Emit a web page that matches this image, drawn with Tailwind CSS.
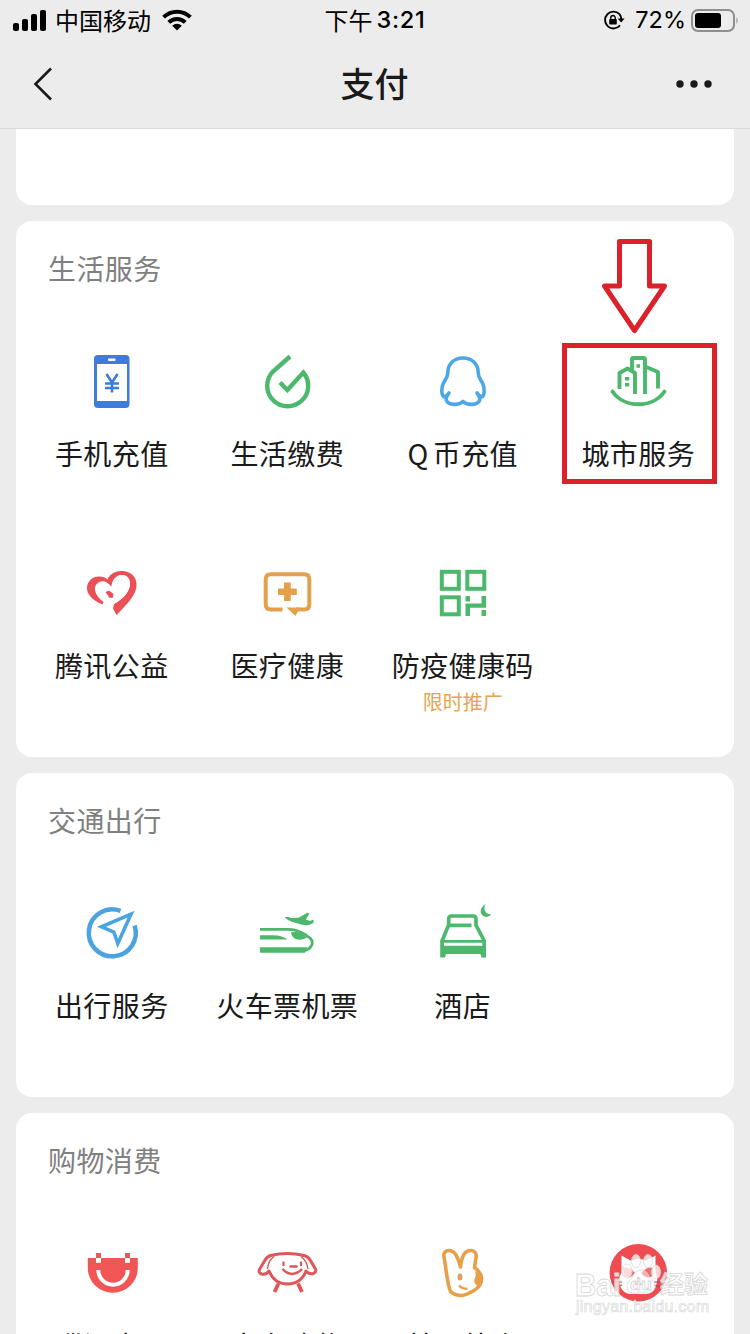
<!DOCTYPE html>
<html lang="zh-CN">
<head>
    <meta charset="UTF-8">
    <meta name="viewport" content="width=device-width, initial-scale=1.0">
    <title>支付</title>
    <script src="https://cdn.jsdelivr.net/npm/@tailwindcss/browser@4"></script>
</head>
<body class="relative w-[750px] h-[1334px] overflow-hidden bg-[#ececec] text-[#1a1a1a] font-['Noto_Sans_CJK_SC',sans-serif]">
    <header class="h-[129px] border-b border-[#dadada]">
        <!-- Status bar -->
        <div class="grid grid-cols-3 h-10 items-center text-black text-2xl leading-10">
            <div class="flex items-center pl-[13px]">
                <svg class="w-[33px] h-[21px]" viewBox="0 0 33 21">
                    <rect x="0" y="13" width="6" height="8" rx="2"/>
                    <rect x="9" y="9" width="6" height="12" rx="2"/>
                    <rect x="18" y="4" width="6" height="17" rx="2"/>
                    <rect x="27" y="0" width="6" height="21" rx="2"/>
                </svg>
                <span class="ml-[9px]">中国移动</span>
                <svg class="ml-[11px] w-[30px] h-[22px]" viewBox="0 0 30 22" fill="none" stroke="#000" stroke-width="4">
                    <path d="M1.6 8.2a19 19 0 0 1 26.8 0"/>
                    <path d="M6.8 13.4a11.7 11.7 0 0 1 16.4 0"/>
                    <path d="M15 21.5l-4.8-4.7a6.8 6.8 0 0 1 9.6 0z" fill="#000" stroke="none"/>
                </svg>
            </div>
            <div class="flex items-center justify-center">
                <span>下午</span>
                <span class="ml-1 font-medium font-['Inter',sans-serif] text-[23.5px] tracking-[0.7px]">3:21</span>
            </div>
            <div class="flex items-center justify-end pr-[11px]">
                <svg class="w-[22px] h-[20px]" viewBox="0 0 22 20" fill="none" stroke="#000" stroke-width="1.9">
                    <path d="M16.5 4.2A8.4 8.4 0 1 0 17 15.3"/>
                    <path d="M16.5 4.2a8.4 8.4 0 0 1 1.8 5"/>
                    <path d="M14.6 8.6h7l-3.5 4z" fill="#000" stroke="none"/>
                    <rect x="6.2" y="9" width="7.6" height="5.6" rx="1" fill="#000" stroke="none"/>
                    <path d="M7.8 9.5V7.7a2.2 2.2 0 0 1 4.4 0v1.8" stroke-width="1.4"/>
                </svg>
                <span class="ml-[10px] font-['Inter',sans-serif] text-[23.5px]">72%</span>
                <svg class="ml-[5px] w-[48px] h-[23px]" viewBox="0 0 48 23">
                    <rect x="1" y="1" width="42" height="21" rx="6" fill="none" stroke="#8f8f8f" stroke-width="2"/>
                    <rect x="4" y="4" width="26" height="15" rx="3"/>
                    <path d="M45.500 8q2.400 3.500 0 7z" fill="#8f8f8f"/>
                </svg>
            </div>
        </div>
        <!-- Nav bar -->
        <div class="flex h-[88px] items-center justify-between pl-[33px] pr-[38px]">
            <svg class="w-[40px] h-[34px]" viewBox="0 0 40 34" fill="none" stroke="#1a1a1a" stroke-width="2.6">
                <path d="M18 1.500L2.500 17 18 32.500"/>
            </svg>
            <h1 class="pb-0.5 text-[34px] leading-none font-medium">支付</h1>
            <svg class="w-[36px] h-2" viewBox="0 0 36 8" fill="#1a1a1a">
                <circle cx="4" cy="4" r="3.700"/><circle cx="18" cy="4" r="3.700"/><circle cx="32" cy="4" r="3.700"/>
            </svg>
        </div>
    </header>

    <main class="px-4 flex flex-col gap-4 text-[28px] tracking-[0.4px]">
        <section class="h-[76px] bg-white rounded-b-2xl"></section>

        <section class="h-[536px] px-2 bg-white rounded-2xl">
            <h2 class="h-24 pl-6 leading-[94px] text-[#808080]">生活服务</h2>
            <div class="grid grid-cols-4">
                <div class="h-[212px] pt-8 flex flex-col items-center">
                    <svg class="size-16" viewBox="0 0 64 64">
                        <rect x="14" y="6" width="35.500" height="53" rx="4" fill="#3b7dd8"/>
                        <rect x="17" y="15" width="30" height="37" fill="#fff"/>
                        <rect x="28" y="9.500" width="7.500" height="2.600" rx="1" fill="#fff"/>
                        <path d="M26.500 25l5.500 8.500 5.500-8.500M25 34.500h14M25 39h14M32 33.500V43.500" fill="none" stroke="#3b7dd8" stroke-width="2.600"/>
                    </svg>
                    <p class="mt-5 leading-10">手机充值</p>
                </div>
                <div class="h-[212px] pt-8 flex flex-col items-center">
                    <svg class="size-16" viewBox="0 0 64 64" fill="none" stroke="#4cb86c" stroke-width="4.400">
                        <path d="M35 7.500L18 22.500A20.500 20.500 0 1 0 48.300 23.500L32.400 41l-7.400-7.500"/>
                    </svg>
                    <p class="mt-5 leading-10">生活缴费</p>
                </div>
                <div class="h-[212px] pt-8 flex flex-col items-center">
                    <svg class="size-16" viewBox="0 0 64 64" fill="none" stroke="#4ba7e5" stroke-width="3.600" stroke-linejoin="round" stroke-linecap="round">
                        <path d="M32 9C22.500 9 16.800 15.500 16.800 23.500C16.800 28 15 29.500 12.500 34C10 39 10.500 46 12.500 47.500C14 48 16.500 46 18 44C15.500 47 14.500 49 15.500 51.500C17.500 56.500 28 56.500 32 52.500C36 56.500 46.500 56.500 48.500 51.500C49.500 49 48.500 47 46 44C47.500 46 50 48 51.500 47.500C53.500 46 54 39 51.500 34C49 29.500 47.200 28 47.200 23.500C47.200 15.500 41.500 9 32 9Z"/>
                    </svg>
                    <p class="mt-5 leading-10">Q<span class="ml-1">币充值</span></p>
                </div>
                <div class="h-[212px] pt-8 flex flex-col items-center">
                    <svg class="size-16" viewBox="0 0 64 64" fill="none" stroke="#4cb86c" stroke-width="3.900" stroke-linejoin="round">
                        <path d="M6.500 42.500C18 59.500 47 59.500 58.500 42.500" stroke-linecap="round"/>
                        <path d="M13.500 40V24l8-4.500 7.500 4.500V45"/>
                        <path d="M26 21V10.500q0-1.500 1.500-1.500h10q1.500 0 1.500 1.500V45"/>
                        <path d="M39 17.500l13 5.500V39.500"/>
                        <path d="M19 29.700h4.300M19 35.700h4.300M30.500 17h3.600" stroke-width="3.600"/>
                    </svg>
                    <p class="mt-5 leading-10">城市服务</p>
                </div>
                <div class="h-[212px] pt-8 flex flex-col items-center">
                    <svg class="size-16" viewBox="0 0 64 64" fill="#ea5055">
                        <path d="M22.500 43.500C12 39 7 33 7 27.500C7 20 12.500 15.500 19 15.500C23 15.500 25.500 16.700 27.500 18.500C30 12.500 36 9.500 43 10C51.500 10.700 57 16.500 56.500 24.500C56 34 49 41 36.500 54L33 47.500L34 43C44 37.500 49.500 30 50 23.500C50.400 17.500 46.500 13.500 41.500 14C36 14.500 32 19 31.500 26C27.500 20.500 23 19 18.500 21.500C12.500 25 14 34 23.500 41Z"/>
                        <path d="M34 43C44 37.500 49.500 30 50 23.500C50.400 17.500 46.500 13.500 41.500 14C36 14.500 32 19 31.500 26L28.500 30L30 42z" fill="#fff"/>
                        <path d="M25.500 31.500q3-3 5.500-.5l2.500 2-.8 4-4-.4-.7-2.600z"/>
                    </svg>
                    <p class="mt-5 leading-10">腾讯公益</p>
                </div>
                <div class="h-[212px] pt-8 flex flex-col items-center">
                    <svg class="size-16" viewBox="0 0 64 64" fill="#e5a04c">
                        <path d="M27.500 48.500H16q-5.300 0-5.300-5.300V18.600q0-5.300 5.300-5.300H49q5.300 0 5.300 5.300V43.200q0 5.300-5.300 5.300H41" fill="none" stroke="#e5a04c" stroke-width="4"/>
                        <path d="M31.500 46.500h13.500l-4.500 8.500z"/>
                        <path d="M29 21.500h6.800v5.900h6v6.600h-6v6H29v-6h-6v-6.600h6z"/>
                    </svg>
                    <p class="mt-5 leading-10">医疗健康</p>
                </div>
                <div class="h-[212px] pt-8 flex flex-col items-center">
                    <svg class="size-16" viewBox="0 0 64 64" fill="#4cb86c">
                        <g fill="none" stroke="#4cb86c" stroke-width="4">
                            <rect x="10.800" y="10.800" width="17" height="17"/>
                            <rect x="36.300" y="10.800" width="17" height="17"/>
                            <rect x="10.800" y="36.300" width="17" height="17"/>
                        </g>
                        <path d="M34.500 35h4.500v5.500h-4.500zM50.500 35h4.600v11.800H39V55h-4.500V42.600h16zM50.500 49h4.600v6h-4.600z"/>
                    </svg>
                    <p class="mt-5 leading-10">防疫健康码</p>
                    <p class="mt-[3px] leading-7 text-[20px] tracking-normal text-[#e5a552]">限时推广</p>
                </div>
            </div>
        </section>

        <section class="h-[324px] px-2 bg-white rounded-2xl">
            <h2 class="h-24 pl-6 leading-[94px] text-[#808080]">交通出行</h2>
            <div class="grid grid-cols-4">
                <div class="h-[212px] pt-8 flex flex-col items-center">
                    <svg class="size-16" viewBox="0 0 64 64" fill="none" stroke="#4ba3e0">
                        <path d="M40.500 9.800A23.500 23.500 0 1 0 54.600 24.500" stroke-width="4.500"/>
                        <path d="M51 13.200L21.500 25.800l12.300 5.200L37.800 42.500z" stroke-width="3.600"/>
                    </svg>
                    <p class="mt-5 leading-10">出行服务</p>
                </div>
                <div class="h-[212px] pt-8 flex flex-col items-center">
                    <svg class="size-16" viewBox="0 0 64 64" fill="#4cb86c">
                        <path d="M5 28.300H33C43 28.300 50 32.500 55.500 37.500C59.500 42 56 48 50 49.500" fill="none" stroke="#4cb86c" stroke-width="2.800"/>
                        <path d="M5 34.300H18Q28 34.500 32.500 38.600H5zM5 46.300H52.500L50 51.700H5z"/>
                        <path d="M36 31.500Q44 28.500 52 36.500Q46 40 40.500 38Q36.500 35.500 36 31.500z"/>
                        <path d="M30 16.300l2.500-.6 4 1.300 7-.3L52.300 11.800l2.200.8-3.700 6 4 1.300 4-1.400-.4 3.500-4.500 2q-6 .6-11-1.500-8-1.200-13.400-6.200z"/>
                    </svg>
                    <p class="mt-5 leading-10">火车票机票</p>
                </div>
                <div class="h-[212px] pt-8 flex flex-col items-center">
                    <svg class="size-16" viewBox="0 0 64 64" fill="#4cb86c">
                        <path d="M11 40L17.700 24V18q0-3 3-3H42q3 0 3 3v6L53.300 40" fill="none" stroke="#4cb86c" stroke-width="3.700"/>
                        <path d="M17 22.500h23.500v3.800H17zM9.200 39h45.800V56.500H50.500L49.500 53H15L14 56.500H9.200z"/>
                        <path d="M13 41.800h38.300v3H13z" fill="#fff"/>
                        <path d="M54.500 3C47.500 7 48.500 15.500 55.500 16Q58.500 16 60.200 13.300C54 13.500 51.800 8 54.500 3z"/>
                    </svg>
                    <p class="mt-5 leading-10">酒店</p>
                </div>
            </div>
        </section>

        <section class="h-[221px] overflow-hidden px-2 bg-white rounded-t-2xl">
            <h2 class="h-24 pl-6 leading-[94px] text-[#808080]">购物消费</h2>
            <div class="grid grid-cols-4">
                <div class="h-[212px] pt-8 flex flex-col items-center">
                    <svg class="size-16" viewBox="0 0 64 64" fill="#f25555">
                        <path d="M7.800 17H57.800V27a25 24.700 0 0 1-50 0z"/>
                        <path d="M16 12h5v5h-5zM45 12h5v5h-5z"/>
                        <path d="M16 17h5v4.700h-5zM45 17h5v4.700h-5z" fill="#fff"/>
                        <path d="M18.300 29a14.700 14.700 0 0 0 29.400 0" fill="none" stroke="#fff" stroke-width="4"/>
                    </svg>
                    <p class="mt-5 leading-10">腾讯惠聚</p>
                </div>
                <div class="h-[212px] pt-8 flex flex-col items-center">
                    <svg class="size-16" viewBox="0 0 64 64" fill="none" stroke="#e05558" stroke-width="3" stroke-linejoin="round">
                        <path d="M15.500 14.500Q32 10.500 49 14.500Q54 16 56 20.500L60.500 28Q61.500 31 58.500 32.500Q54 33.500 51 30Q46 43 32.500 43Q19.500 43 14 30Q11 34 6.500 33Q3 31.500 4.500 28.500L9.500 20Q11.500 16 15.500 14.500z"/>
                        <path d="M23.500 42.500L19.500 51M43 42.500l4 8.500" stroke-width="3.800"/>
                        <path d="M28.500 20.500v4.500M46 20.500v4.500" stroke-width="2.200"/>
                        <path d="M35.500 25.500h6" stroke-width="2.600" stroke-linecap="round"/>
                        <path d="M27.500 28Q37 38 47 28" stroke-width="2.400"/>
                        <path d="M19 15.500Q13 20 12.500 28M46 15.500Q52 20 53 28" stroke-width="1.400"/>
                    </svg>
                    <p class="mt-5 leading-10">京东购物</p>
                </div>
                <div class="h-[212px] pt-8 flex flex-col items-center">
                    <svg class="size-16" viewBox="0 0 64 64" fill="none" stroke="#e8a048" stroke-width="3.600" stroke-linejoin="round">
                        <path d="M13 16C12 11.500 15 9.500 18 9.500C24.500 9.500 27 17 29.500 26C30.500 16 34 9.500 39.500 9.500C44 9.500 46 13 45 17L43.500 26.500C48 30 51 34 50.500 38C50.500 43 48 46.500 43 49.500C38 52.500 34 54 31 54.500C26.500 54.500 21.500 52.500 19.500 50.500C16.500 44 15.500 30 13 16Z"/>
                        <path d="M44 30q6 3 6.500 8t-3.500 7.500q-6-4-3-8.500 1.500-3 0-7z" fill="#e8a048" stroke="none"/>
                        <ellipse cx="29" cy="36" rx="2.500" ry="3.600" fill="#e0a060" stroke="none"/>
                        <path d="M28 44.500q3 3.500 8.500 3.300" stroke-width="2.400"/>
                    </svg>
                    <p class="mt-5 leading-10">美团外卖</p>
                </div>
                <div class="h-[212px] pt-8 flex flex-col items-center">
                    <svg class="size-16" viewBox="0 0 64 64">
                        <circle cx="32.300" cy="31.700" r="28.700" fill="#ee4c50"/>
                        <path d="M15.500 14.500l9 5q8-3 16 0l9-5v17q4 8-1 16-3 5-8 5.500H24q-6-.5-9-6-4-8 .5-15.500z" fill="#fff"/>
                        <path d="M17 27q6-2 12 5-5 7-11 3zM47.500 27q-6-2-12 5 5 7 11 3z" fill="#ee7075"/>
                        <path d="M32.300 36v6M29 43h7M6 41h10M48 41h10M8 46l8-2M48 44l8 2" stroke="#9b4a4c" stroke-width="1.200"/>
                    </svg>
                </div>
            </div>
        </section>
    </main>

    <!-- Callout around 城市服务 -->
    <svg class="absolute left-[600px] top-[236px] w-[70px] h-[100px]" viewBox="0 0 70 100" fill="none" stroke="#db222a" stroke-width="5" stroke-linejoin="round">
        <path d="M19.500 5.500H49.500V50H64.500L34.500 94.500 4.500 50H19.500z"/>
    </svg>
    <div class="absolute left-[562px] top-[343px] w-[155px] h-[141px] border-5 border-[#db222a]"></div>

    <!-- Watermark -->
    <svg class="absolute left-[570px] top-[1250px] w-[150px] h-[70px]" viewBox="0 0 150 70" fill="#fff" fill-opacity=".75" stroke="#d6d6d6" stroke-width=".8">
        <ellipse cx="57" cy="21" rx="5" ry="7"/>
        <ellipse cx="66" cy="11" rx="4.500" ry="6.500"/>
        <ellipse cx="78" cy="11" rx="4.500" ry="6.500"/>
        <ellipse cx="86" cy="22" rx="4.500" ry="7"/>
        <path d="M71 20q6 0 9 8 8 6 4 12-3 5-13 2-10 3-13-2-3-6 4-12 3-8 9-8z" fill-opacity=".45"/>
        <text x="5" y="46" font-family="Liberation Sans, sans-serif" font-weight="bold" font-size="31" textLength="46" lengthAdjust="spacingAndGlyphs">Bai</text>
        <text x="60" y="40" font-family="Liberation Sans, sans-serif" font-weight="bold" font-size="17" textLength="22" lengthAdjust="spacingAndGlyphs">du</text>
        <text x="90" y="43" font-family="Noto Sans CJK SC, sans-serif" font-weight="bold" font-size="24" textLength="48" lengthAdjust="spacingAndGlyphs">经验</text>
        <text x="6" y="62" font-family="Liberation Sans, sans-serif" font-size="16" stroke-width=".6" textLength="133">jingyan.baidu.com</text>
    </svg>
</body>
</html>
